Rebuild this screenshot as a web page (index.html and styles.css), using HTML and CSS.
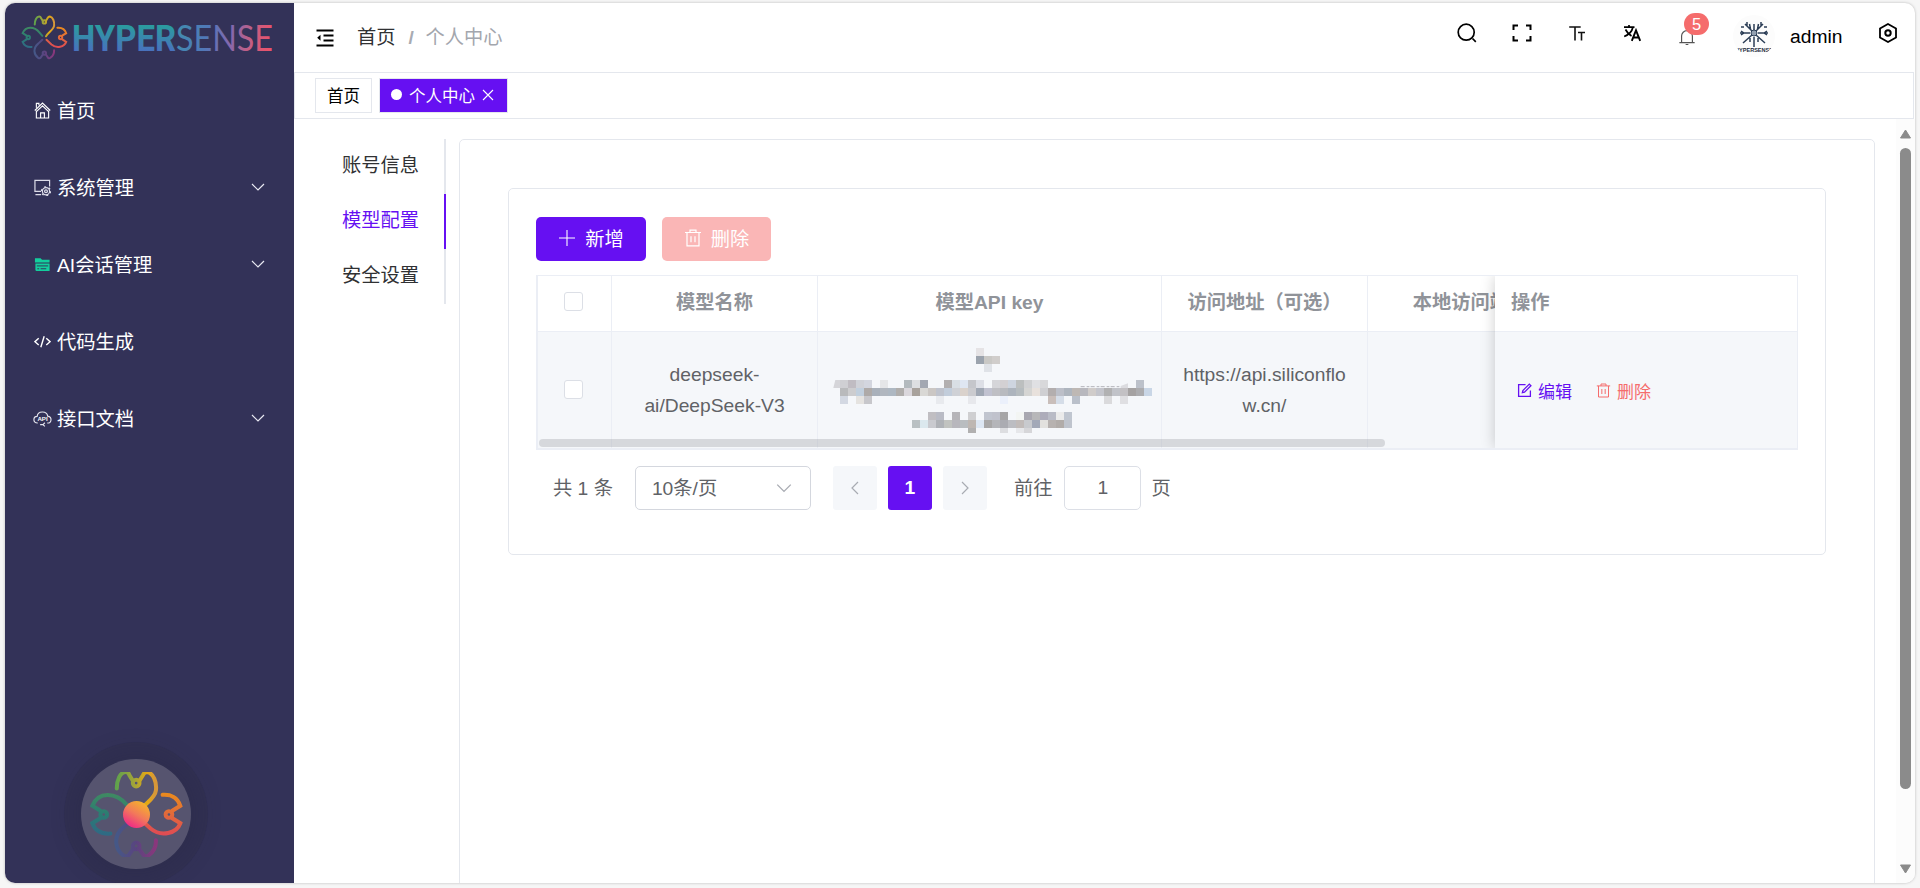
FILE: index.html
```html
<!DOCTYPE html>
<html lang="zh-CN">
<head>
<meta charset="utf-8">
<title>个人中心</title>
<link rel="stylesheet" href="styles.css">
</head>
<body>
<svg class="defs" width="0" height="0">
  <defs>
    <linearGradient id="gT" gradientUnits="userSpaceOnUse" x1="200" y1="150" x2="315" y2="150"><stop offset="0" stop-color="#5fa24c"/><stop offset=".5" stop-color="#a8a436"/><stop offset=".8" stop-color="#e5a912"/><stop offset="1" stop-color="#d6973a"/></linearGradient>
    <linearGradient id="gR" gradientUnits="userSpaceOnUse" x1="350" y1="185" x2="340" y2="310"><stop offset="0" stop-color="#ea8a1e"/><stop offset=".5" stop-color="#e0683c"/><stop offset="1" stop-color="#df4a55"/></linearGradient>
    <linearGradient id="gL" gradientUnits="userSpaceOnUse" x1="170" y1="185" x2="160" y2="305"><stop offset="0" stop-color="#3f8a62"/><stop offset=".5" stop-color="#2b7d72"/><stop offset="1" stop-color="#2f6a84"/></linearGradient>
    <linearGradient id="gB" gradientUnits="userSpaceOnUse" x1="200" y1="330" x2="318" y2="330"><stop offset="0" stop-color="#455887"/><stop offset=".5" stop-color="#5a4480"/><stop offset="1" stop-color="#8a377c"/></linearGradient>
    <linearGradient id="gC" x1=".8" y1="0" x2=".2" y2="1"><stop offset="0" stop-color="#f5b926"/><stop offset=".5" stop-color="#f2795a"/><stop offset="1" stop-color="#ef1f8c"/></linearGradient>
    <linearGradient id="w1" x1="0" y1="0" x2="0" y2="1"><stop offset=".2" stop-color="#2b9ba0"/><stop offset=".8" stop-color="#4a70be"/></linearGradient>
    <linearGradient id="w2" gradientUnits="userSpaceOnUse" x1="105" y1="0" x2="200" y2="22"><stop offset="0" stop-color="#3f8fae"/><stop offset=".35" stop-color="#5078b8"/><stop offset=".6" stop-color="#8468ae"/><stop offset=".8" stop-color="#c25f85"/><stop offset="1" stop-color="#e8536c"/></linearGradient>
    <symbol id="flower" viewBox="118 120 284 254">
      <g fill="none" stroke-width="12" stroke-linecap="round">
        <g stroke="url(#gT)"><path d="M201 169C201 145 211 120 228 120Q236 120 239 130L249 146M269 146L279 130Q283 120 292 120C311 124 321 150 318 175C315 202 280 215 269 240"/><circle cx="259" cy="153" r="10"/></g>
        <g stroke="url(#gR)"><path d="M338 188C362 186 383 196 391 221L367 236M367 258L391 273C380 303 335 316 302 289L272 261"/><circle cx="357" cy="247" r="10"/></g>
        <g stroke="url(#gL)"><path d="M247 237L230 217C198 180 146 177 128 221L152 236M152 258L128 273C136 294 155 306 182 304"/><circle cx="162" cy="247" r="10"/></g>
        <g stroke="url(#gB)"><path d="M247 261L222 284C188 312 196 352 222 370Q232 376 238 367L250 350M268 350L280 367Q286 376 296 369C311 359 319 344 318 324"/><circle cx="259" cy="341" r="10"/></g>
      </g>
    </symbol>
    <symbol id="down" viewBox="0 0 16 16"><path d="M2 5l6 6 6-6" fill="none" stroke="currentColor" stroke-width="1.2"/></symbol>
    <symbol id="trash" viewBox="0 0 18 18"><path d="M1 3.5h16M6 3.5V1.2h6v2.3M3 3.5v13.3h12V3.5M7 7.2v6M11 7.2v6" fill="none" stroke="currentColor" stroke-width="1.2"/></symbol>
  </defs>
</svg>
<div class="window">
  <aside class="sidebar">
    <div class="logo">
      <svg class="logo-mark"><use href="#flower"/></svg>
      <svg class="logo-word" viewBox="0 0 208 48"><text y="37" x="1" class="word-bold" textLength="104" lengthAdjust="spacingAndGlyphs" fill="url(#w1)">HYPER</text><text y="37" x="105" class="word-light" textLength="97" lengthAdjust="spacingAndGlyphs" fill="url(#w2)">SENSE</text></svg>
    </div>
    <nav class="menu">
      <div class="menu-item">
        <svg class="mi" viewBox="0 0 18 18" fill="none" stroke="#fff" stroke-width="1.2"><path d="M.8 9L9 1.200 17.200 9M2.500 9V17h13V9M2.500 6V1.500h2.700v2M7 17v-5.500h4V17M2.800 10L9 4l6.200 6"/></svg><span>首页</span>
      </div>
      <div class="menu-item">
        <svg class="mi" viewBox="0 0 18 18" fill="none" stroke="#dcdce8" stroke-width="1.3"><path d="M7.500 13H1V1.500h15.500V8M1.500 16.500h6"/><circle cx="12.700" cy="13" r="1.500"/><circle cx="12.700" cy="13" r="3.800"/><circle cx="12.700" cy="13" r="4.700" stroke-dasharray="2 2.920" stroke-width="1.500"/></svg><span>系统管理</span><svg class="arrow"><use href="#down"/></svg>
      </div>
      <div class="menu-item">
        <svg class="mi" viewBox="0 0 18 18"><path d="M1 2.500h6l1.500 1.500H16.500v3H1zM1.500 8H16.500v8H2.500L1.500 15z" fill="#13ce9d"/><path d="M3 10.500h12M3.500 13.500h2M7 13.500h6" stroke="#333258" stroke-width="1"/></svg><span>AI会话管理</span><svg class="arrow"><use href="#down"/></svg>
      </div>
      <div class="menu-item">
        <svg class="mi" viewBox="0 0 18 18" fill="none" stroke="#fff" stroke-width="1.5"><path d="M5 5.500L1 9.200l4 3.600M13 5.500l4 3.700-4 3.600M10.800 3.500L7.200 15"/></svg><span>代码生成</span>
      </div>
      <div class="menu-item">
        <svg class="mi mi-wide" viewBox="0 0 20 18"><path d="M5 13.800C-.5 14-.2 7 4.300 6.800 5 .8 14.500.5 15.500 6.500c5 .8 4.500 7.500-.5 7.300M7.500 15.500h3.300M12.500 13.500l-2 2 2 1.800" fill="none" stroke="#e6e6ef" stroke-width="1.2"/><text x="4.600" y="12" class="api">API</text></svg><span>接口文档</span><svg class="arrow"><use href="#down"/></svg>
      </div>
    </nav>
    <div class="float-ball"><svg class="ball-flower"><use href="#flower"/></svg><svg class="ball-core" viewBox="0 0 27 27"><circle cx="13.500" cy="13.500" r="13.500" fill="url(#gC)"/></svg></div>
  </aside>
  <div class="page">
    <header class="header">
      <svg class="fold" viewBox="0 0 18 18" stroke="#000" stroke-width="1.800"><path d="M.5 1.500h17M7.500 6.500h10M7.500 11.500h10M.5 16.500h17"/><path d="M4.500 5.800v6L1.200 8.800z" stroke="none"/></svg>
      <div class="crumbs"><span>首页</span><i>/</i><em>个人中心</em></div>
      <div class="tools">
        <div class="tool"><svg viewBox="0 0 20 20" fill="none" stroke="#000" stroke-width="1.700"><circle cx="9.200" cy="9.200" r="8"/><path d="M15.500 15.500l3.300 3.300"/></svg></div>
        <div class="tool"><svg viewBox="0 0 20 20" fill="none" stroke="#000" stroke-width="2"><path d="M1.500 7V2.500H6M14 2.500h4.500V7M1.500 13v4.500H6M14 17.500h4.500V13"/></svg></div>
        <div class="tool"><svg viewBox="0 0 20 20" fill="none" stroke="#111" stroke-width="1.600"><path d="M2.200 4h11.500M8 4v13.500M11 9.500h7M14.500 9.500v8"/></svg></div>
        <div class="tool"><svg viewBox="0 0 20 20" fill="none" stroke="#000" stroke-width="1.700"><path d="M2 4.200h10.500M7 2v2M3.500 6.500c1.500 3 3.500 5 6 6.500M10.800 4.500C10 8.500 7 11.500 2.200 13.500"/><path d="M9.800 17.800l4.200-10.500 4.200 10.500M11.500 14.500h5" stroke-width="1.900"/></svg></div>
        <div class="tool bell"><svg viewBox="0 0 20 20" fill="none" stroke="#555" stroke-width="1.300"><path d="M1.500 16.200h17M4 16.200V9a6 6 0 0 1 12 0v7.200M8.500 18.300h3"/></svg><b class="badge">5</b></div>
        <div class="avatar"><svg viewBox="0 0 42 42"><g stroke="#2c3e56" stroke-width="1.500" fill="none"><path d="M21 15V9M21 22v10M17 18H7M25 18h10M19 16l-7-7M23 16l7-7M19 20l-9 8M23 20l9 8M14 11V7M11 12H8M28 11V7M31 12h3M17.500 14l-1-5M24.500 14l1-5M11 18l-3-2M11 18l-3 2M31 18l3-2M31 18l3 2M17 23v4M25 23v4"/></g><circle cx="21" cy="18" r="3" fill="#93a0b0" stroke="#2c3e56"/><text x="2" y="36.500" textLength="38" lengthAdjust="spacingAndGlyphs" class="avatar-text">HYPERSENSE</text></svg></div>
        <span class="user">admin</span>
        <div class="tool setting"><svg viewBox="0 0 20 20" fill="none" stroke="#000" stroke-width="1.800"><path d="M10 1l8 4.500v9L10 19l-8-4.500v-9z"/><circle cx="10" cy="10" r="2.700" stroke-width="2"/></svg></div>
      </div>
    </header>
    <div class="tags">
      <div class="tag">首页</div>
      <div class="tag active"><i class="dot"></i>个人中心<svg class="close" viewBox="0 0 12 12"><path d="M1 1l10 10M11 1L1 11" stroke="#fff" stroke-width="1.100"/></svg></div>
    </div>
    <main class="main">
      <div class="tabs"><div class="tab">账号信息</div><div class="tab on">模型配置</div><div class="tab">安全设置</div></div>
      <section class="outer">
        <div class="card">
          <div class="buttons">
            <div class="btn primary"><svg viewBox="0 0 18 18"><path d="M9 1v16M1 9h16" stroke="#fff" stroke-width="1.100"/></svg>新增</div>
            <div class="btn danger"><svg><use href="#trash"/></svg>删除</div>
          </div>
          <div class="table">
            <div class="row head">
              <div class="cell"><i class="check"></i></div><div class="cell">模型名称</div><div class="cell">模型API key</div><div class="cell">访问地址（可选）</div><div class="cell">本地访问端口</div>
            </div>
            <div class="row body">
              <div class="cell"><i class="check"></i></div>
              <div class="cell">deepseek-<br>ai/DeepSeek-V3</div>
              <div class="cell mosaic-cell"><svg id="mosaic" class="mosaic" viewBox="96 264 966 258"></svg></div>
              <div class="cell">https://api.siliconflo<br>w.cn/</div>
              <div class="cell"></div>
            </div>
            <div class="fixed">
              <div class="fixed-head">操作</div>
              <div class="fixed-body">
                <span class="link edit"><svg viewBox="0 0 14 14" fill="none" stroke="currentColor" stroke-width="1.200"><path d="M8 1.500H1.500v11h11V7M5 9l.5-2L11.500 1l1.500 1.500L7 8.500z"/></svg>编辑</span>
                <span class="link del"><svg><use href="#trash"/></svg>删除</span>
              </div>
            </div>
            <div class="hbar"></div>
          </div>
          <div class="pager">
            <span>共 1 条</span>
            <div class="select">10条/页<svg><use href="#down"/></svg></div>
            <div class="pbtn"><svg class="left"><use href="#down"/></svg></div>
            <div class="pbtn current">1</div>
            <div class="pbtn"><svg class="right"><use href="#down"/></svg></div>
            <span class="goto">前往</span>
            <div class="pinput">1</div>
            <span>页</span>
          </div>
        </div>
      </section>
      <div class="vscroll"><svg viewBox="0 0 12 10"><path d="M6 1l5 8H1z" fill="#8b8b8b" stroke="#8b8b8b" stroke-linejoin="round"/></svg><div class="thumb"></div><svg class="bottom" viewBox="0 0 12 10"><path d="M6 9L1 1h10z" fill="#8b8b8b" stroke="#8b8b8b" stroke-linejoin="round"/></svg></div>
    </main>
  </div>
</div>
<script src="mosaic.js"></script>
</body>
</html>
```
FILE: styles.css
```css
* { box-sizing: border-box; }
body { margin: 0; width: 1920px; height: 888px; overflow: hidden; background: #f6f6f6; padding: 3px 5px 5px; font: 19.25px "Liberation Sans", "Noto Sans CJK SC", sans-serif; color: #303133; }
.defs { position: absolute; }
svg { flex: none; display: block; }
i, em { font-style: normal; }
.window { display: flex; width: 1910px; height: 880px; border-radius: 10px; overflow: hidden; background: #fff; box-shadow: 0 0 3px rgba(0,0,0,.25); }
.sidebar { position: relative; width: 289px; background: #333258; color: #fff; overflow: hidden; flex: none; }
.logo { display: flex; height: 69px; padding: 12px 0 0 16px; gap: 3px; }
.logo-mark { width: 47px; height: 45px; }
.logo-word { width: 208px; height: 48px; margin-top: -1px; overflow: visible; }
.word-bold { font: 700 36px "Roboto", "Lato", sans-serif; }
.word-light { font: 400 36px "Lato", "Roboto", sans-serif; }
.menu-item { display: flex; align-items: center; height: 77px; padding: 0 28px 2px 29px; }
.mi { width: 17px; height: 17px; margin-right: 6px; position: relative; top: 1px; }
.mi-wide { width: 19px; margin: 0 5px 0 -1px; }
.api { font: 700 6.5px "Liberation Sans", sans-serif; fill: #fff; }
.arrow { width: 16px; height: 16px; margin-left: auto; color: #e9e9f2; }
.float-ball { position: absolute; left: 76px; top: 756px; width: 110px; height: 110px; border-radius: 50%; background: #56546f; box-shadow: 0 0 0 17px rgba(40,38,62,.2), 0 0 22px 8px rgba(40,38,66,.25); display: grid; place-items: center; }
.ball-flower { width: 95px; height: 85px; grid-area: 1/1; }
.ball-core { width: 27px; height: 27px; grid-area: 1/1; }
.page { flex: 1; display: flex; flex-direction: column; min-width: 0; }
.header { display: flex; height: 69px; align-items: flex-start; padding-left: 22px; flex: none; }
.fold { width: 18px; height: 18px; margin-top: 26px; }
.crumbs { display: flex; margin: 21px 0 0 23px; line-height: 28px; }
.crumbs i { color: #a8abb2; margin: 0 12px 0 13px; font-weight: 700; width: 5px; }
.crumbs em { color: #a3a6ad; }
.tools { margin-left: auto; display: flex; }
.tool { width: 55px; height: 60px; display: flex; justify-content: center; padding: 20px 2px 0 0; position: relative; }
.tool svg { width: 20px; height: 20px; }
.bell { padding-top: 25px; }
.bell svg { width: 18px; height: 18px; }
.setting { padding-right: 0; }
.badge { position: absolute; left: 24px; top: 10px; width: 25px; height: 22px; border-radius: 11px; background: #f56c6c; color: #fff; font: 16.5px/22px "Liberation Sans", sans-serif; text-align: center; }
.avatar { width: 42px; height: 42px; border-radius: 50%; background: #fcfcfc; margin: 12px 15px 0 18px; overflow: hidden; }
.avatar-text { font: 700 5.5px "Liberation Sans", sans-serif; fill: #1f2c40; }
.user { color: #000; line-height: 28px; margin: 20px 17px 0 0; width: 53px; }
.tags { height: 47px; border: 1px solid #e4e7ed; margin-right: 1px; padding: 5px 0 0 20px; display: flex; gap: 7px; font-size: 16.5px; flex: none; }
.tag { height: 35px; width: 57px; border: 1px solid #e4e7ed; display: flex; align-items: center; justify-content: center; color: #000; padding-bottom: 2px; }
.tag.active { width: 129px; background: #6610f2; color: #fff; padding-right: 2px; }
.dot { width: 11px; height: 11px; border-radius: 50%; background: #fff; margin-right: 7px; }
.close { width: 12px; height: 12px; margin-left: 7px; }
.main { flex: 1; display: flex; min-height: 0; padding-top: 20px; }
.tabs { width: 152px; height: 165px; border-right: 2px solid #e4e7ed; flex: none; }
.tab { height: 55px; line-height: 54px; width: 152px; padding-left: 48px; border-right: 2px solid transparent; }
.tab.on { color: #6610f2; border-right-color: #6610f2; }
.outer { width: 1416px; height: 770px; margin-left: 13px; border: 1px solid #e4e7ed; border-radius: 5px; padding: 48px; flex: none; }
.card { width: 1318px; height: 367px; border: 1px solid #e4e7ed; border-radius: 5px; padding: 28px 27px; }
.buttons { display: flex; gap: 16px; }
.btn { height: 44px; border-radius: 5px; display: flex; align-items: center; justify-content: center; gap: 9px; color: #fff; padding-bottom: 2px; }
.btn svg { width: 18px; height: 18px; }
.primary { width: 110px; background: #6610f2; }
.danger { width: 109px; background: #fab6b6; }
.table { position: relative; width: 1262px; height: 175px; margin-top: 14px; border: solid #ebeef5; border-width: 1px 1px 2px 2px; overflow: hidden; }
.row { display: grid; grid-template-columns: 74px 206px 344px 206px 206px; width: 1036px; color: #606266; }
.cell { border-right: 1px solid #ebeef5; border-bottom: 1px solid #ebeef5; display: flex; align-items: center; justify-content: center; text-align: center; line-height: 31px; white-space: nowrap; }
.cell:first-child { padding-right: 2px; }
.head { height: 56px; font-weight: 700; color: #909399; }
.head .cell { padding-bottom: 2px; }
.head .cell:first-child { padding-bottom: 4px; }
.body { height: 117px; background: #f5f7fa; }
.body .cell { border-bottom: 0; padding-bottom: 2px; }
.check { width: 19px; height: 19px; border: 1px solid #dcdfe6; border-radius: 3px; background: #fff; }
.body .mosaic-cell { align-items: flex-start; justify-content: flex-start; padding: 16px 0 0 14px; }
.mosaic { width: 322px; height: 86px; }
.fixed { position: absolute; right: 0; top: 0; width: 302px; height: 172px; background: #fff; box-shadow: 0 0 14px rgba(0,0,0,.2); }
.fixed-head { height: 56px; line-height: 53px; padding-left: 16px; border-bottom: 1px solid #ebeef5; font-weight: 700; color: #909399; }
.fixed-body { height: 116px; background: #f5f7fa; display: flex; align-items: center; gap: 24px; padding-left: 22px; font-size: 17px; }
.link { display: flex; align-items: center; gap: 6px; }
.link svg { width: 15px; height: 15px; }
.edit { color: #6610f2; }
.del { color: #f56c6c; }
.hbar { position: absolute; left: 1px; bottom: 1px; width: 846px; height: 8px; border-radius: 4px; background: rgba(144,147,153,.3); }
.pager { display: flex; align-items: center; margin: 16px 0 0 17px; height: 44px; color: #606266; }
.pager > span { padding-bottom: 2px; }
.select { width: 176px; height: 44px; border: 1px solid #d4d7de; border-radius: 5px; margin: 0 22px 0 22px; padding: 0 17px 2px 16px; display: flex; align-items: center; justify-content: space-between; }
.select svg { width: 18px; height: 18px; color: #a8abb2; position: relative; top: 1px; }
.pbtn { width: 44px; height: 44px; background: #f5f7fa; border-radius: 3px; margin-right: 11px; display: grid; place-items: center; color: #a8abb2; }
.pbtn svg { width: 16px; height: 16px; }
.left { transform: rotate(90deg); }
.right { transform: rotate(-90deg); }
.current { background: #6610f2; color: #fff; font-weight: 700; }
.goto { margin-left: 16px; }
.pinput { width: 77px; height: 44px; border: 1px solid #dcdfe6; border-radius: 5px; margin: 0 10px 0 12px; line-height: 42px; text-align: center; }
.vscroll { width: 19px; margin: -20px 0 0 auto; background: #fcfcfc; display: flex; flex-direction: column; align-items: center; padding: 10px 0 9px; }
.vscroll svg { width: 13px; height: 10px; }
.thumb { width: 11px; height: 641px; border-radius: 6px; background: #8b8b8b; margin-top: 9px; }
.vscroll .bottom { margin-top: auto; }
```
FILE: mosaic.js
```javascript
// Rows of blurred key blocks: y position, then x:colour pairs.
const rows = {
  264: "528:e5e3e5",
  288: "528:9ba3ad 552:c9c8c5 576:d0cdcb",
  312: "552:dfe2e7",
  360: "120:cfcfd3 144:c0bcc2 168:d0d2d8 192:d3d6df 240:e5e6e8 312:b3babe 336:dddfe1 360:a3a8b2 432:b2afb0 456:d9dfe5 480:dfe6f2 504:c5c6cb 528:dddfe6 576:d5d5d9 600:d3d0d3 624:ced5e0 648:bcbfbf 672:d0d1d3 696:e0e0e3 720:d8d8da 1008:bcc1ca",
  384: "120:b9babc 144:cdcdcf 168:c1cfdd 192:aeaaa8 216:a9b1bb 240:b1b7bf 264:aeb8c2 288:b0aeac 312:dad7dc 336:a8a29c 360:d9d8d5 384:cbc7c4 408:bfc3cd 432:c2cddb 456:cfd1d6 480:dad2cc 504:cbcbcf 528:a1a8b4 552:c1c2d0 576:bfbfc4 600:b8babf 624:adb4bd 648:b6bcbf 672:d5d5d3 696:e8e1dc 720:cfcfd2 744:b3aeae 768:bcbfc8 792:aeb5be 816:beb8b4 840:b8b8be 864:d0ccca 888:c4c5cc 912:b1b1b2 936:c1c3c9 960:c3c1c4 984:a5a2a2 1008:acacaf 1032:c9d6e6",
  408: "120:d3d8e2 168:e5e3e0 192:c7c7cb 408:e8eaee 504:e7e8ec 600:ebf0fb 744:c9beba 768:d5dde8 816:bac0ca 912:dadadc 960:dfdfe2",
  456: "384:c0bec2 408:b9bbc5 456:b6b5b9 504:cfcfd1 552:c1c5cf 576:c0c2cc 600:a6a5a6 648:f3f5f3 672:a8a7b0 696:b7b7b9 720:adacba 744:b9bbc6 768:ebebeb 792:c0c6d0",
  480: "336:b9c0c3 360:dbe8ee 384:c9cacf 408:afb2b7 432:c1c3c0 456:b8b7bd 480:b9bdc0 504:beb7b2 528:dde7f3 552:a8a7a7 576:b4b5b9 600:abacb2 624:bcbdc2 648:c1bbb9 672:c8cace 696:a3a9b8 720:e2e1de 744:b7b2b0 768:b1aca9 792:bfc4cd",
  504: "504:b1b0b0 600:dddee1 648:e6e7ea 672:d6d6d9"
};
let out = '<path d="M106 360H120V384H100Z" fill="#d5d5d9"/><path d="M962 378l22-8v14h-22z" fill="#dcdce0"/><path d="M842 380h118" stroke="#b4b4ba" stroke-width="3" stroke-dasharray="12 6 8 4"/>';
for (const y in rows) {
  for (const pair of rows[y].split(" ")) {
    const [x, c] = pair.split(":");
    out += `<rect x="${x}" y="${y}" width="24" height="${y === "504" ? 15 : 24}" fill="#${c}"/>`;
  }
}
document.getElementById("mosaic").innerHTML = out;
```
